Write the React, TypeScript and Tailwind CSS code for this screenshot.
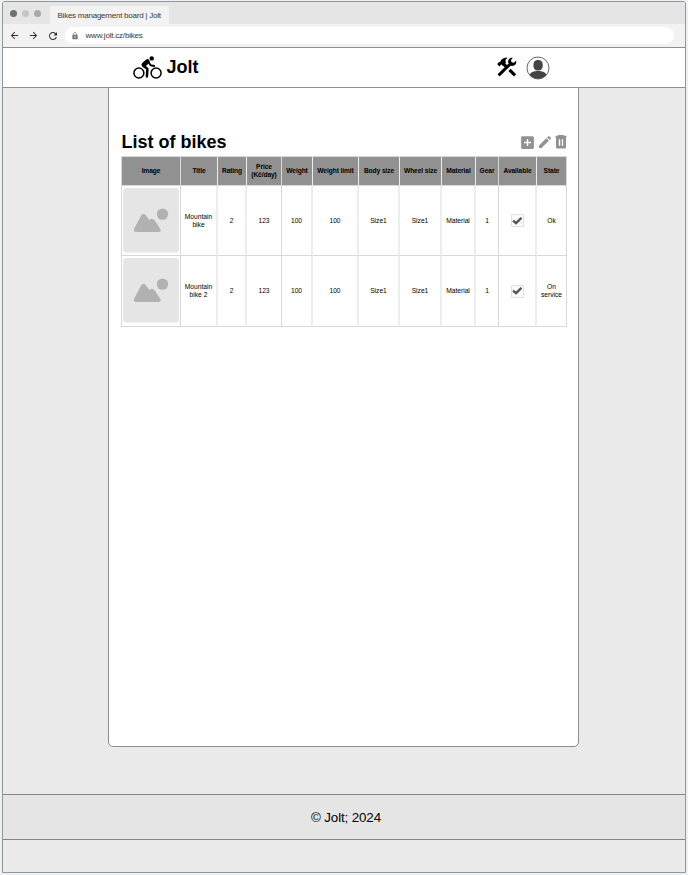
import React from "react";
import { MdAddBox, MdEdit, MdArrowBack, MdArrowForward, MdRefresh, MdLock } from "react-icons/md";

const thin = "border-r border-r-[#d8d8d8]";
const wide = "border-r-2 border-r-[#ededed]";
const edges = [thin, wide, wide, thin, wide, wide, wide, wide, wide, thin, wide, thin];
const heads = ["Image", "Title", "Rating", "Price\n(Kč/day)", "Weight", "Weight limit", "Body size", "Wheel size", "Material", "Gear", "Available", "State"];
const rows = [
  ["", "Mountain\nbike", "2", "123", "100", "100", "Size1", "Size1", "Material", "1", "", "Ok"],
  ["", "Mountain\nbike 2", "2", "123", "100", "100", "Size1", "Size1", "Material", "1", "", "On\nservice"],
];

function Cyclist() {
  return (
    <svg width="29" height="23" viewBox="0 0 29 23" className="ml-[130px] shrink-0" fill="none" stroke="black">
      <circle cx="5.9" cy="17" r="5" strokeWidth="1.5" />
      <circle cx="23.1" cy="17" r="5" strokeWidth="1.5" />
      <circle cx="18.7" cy="2.4" r="2.2" fill="black" stroke="none" />
      <path d="M15.2 5.6 17.6 9.3 21.2 10" strokeWidth="1.9" strokeLinecap="round" strokeLinejoin="round" />
      <path d="M14.4 5.5 10.8 8.7" strokeWidth="4.6" strokeLinecap="round" />
      <path d="M10.6 10 14.4 12.8 13.9 20.4" strokeWidth="2.5" strokeLinecap="round" strokeLinejoin="round" />
    </svg>
  );
}

function Tools() {
  return (
    <svg width="20" height="20" viewBox="0 0 20 20" className="mb-[2px] ml-[298px] shrink-0" stroke="black">
      <path d="M1.6 18.4 14 6.2" strokeWidth="3" fill="none" />
      <path d="M11.2 5.4Q10.6 2 13.8.8L15.8.7 13.9 3.2 14.6 5.2 16.8 5.7 19.2 3.6Q19.6 8 16 8.8 14.2 9.1 13 8.4Z" stroke="none" />
      <path d="M5.8 6.2 9.6 10M12.5 12.9 18.1 18.4" strokeWidth="3.2" fill="none" />
      <path d="M.2 6.9 2.1 4.9 3.1 5.2Q4.2 1.2 9.8.6L10.3 1.2Q7.9 2.2 8.6 4.4L9 5.4 5.6 8.8 4.4 7.3 3.8 8.1 2.3 9.4Z" stroke="none" />
    </svg>
  );
}

function Placeholder({ className = "" }: { className?: string }) {
  return (
    <svg width="56" height="65" viewBox="0 0 56 65" className={"shrink-0 " + className}>
      <rect width="56" height="64.5" rx="3.5" fill="#e5e5e5" />
      <circle cx="39.5" cy="26.1" r="5.7" fill="#b1b1b1" />
      <path d="M11.3 40.3 18.2 27.6Q20.6 24 23.1 27.4L26.4 32Q29.2 29.1 31.8 32.6L37.2 40.8Q38.8 44 35.5 44H13.5Q9.5 44 11.3 40.3Z" fill="#b1b1b1" />
    </svg>
  );
}

function Check() {
  return (
    <span className="flex h-[13px] w-[13px] items-center justify-center rounded-[1px] border border-[#e0e0e0] bg-[#fafafa]">
      <svg width="10" height="10" viewBox="0 0 10 10" fill="none" stroke="#555" strokeWidth="2.4">
        <path d="M1.1 4.6 4 7.2 9.5 1.8" />
      </svg>
    </span>
  );
}

export default function App() {
  return (
    <div className="h-[875px] w-[688px] overflow-hidden bg-[#edf0f4] pl-[2px] pt-px font-['Liberation_Sans',Arial,sans-serif] text-black">
      <div className="flex h-[872px] w-[684px] flex-col overflow-hidden rounded-t-[3px] border border-[#949597] bg-[#eaeaea]">
        <div className="flex h-[22px] shrink-0 bg-[#e5e5e5]">
          <div className="flex w-[47px] items-center gap-[5px] pl-[7px]">
            <i className="h-[7px] w-[7px] rounded-full bg-[#707070]" />
            <i className="h-[7px] w-[7px] rounded-full bg-[#c5c5c5]" />
            <i className="h-[7px] w-[7px] rounded-full bg-[#a8a8a8]" />
          </div>
          <div className="mt-1 h-[18px] w-[119px] whitespace-nowrap rounded-t-[2px] bg-[#f2f2f2] pl-[7.5px] text-[8px] leading-[19px] tracking-[-0.24px] text-[#383838]">Bikes management board | Jolt</div>
        </div>
        <div className="flex h-[23px] shrink-0 items-center bg-[#f2f2f2] text-[#2e2e2e]">
          <MdArrowBack size={11} className="ml-[6px]" />
          <MdArrowForward size={11} className="ml-[8px]" />
          <MdRefresh size={12} className="ml-[8px]" />
          <div className="ml-[6px] flex h-[17px] w-[609px] items-center rounded-full bg-white pl-[6px]">
            <MdLock size={8} color="#777" />
            <span className="ml-[6.5px] text-[8px] tracking-[-0.2px] text-[#383838]">www.jolt.cz/bikes</span>
          </div>
        </div>
        <header className="-mx-px flex h-[41px] shrink-0 items-center border border-[#8e8e8e] bg-white">
          <Cyclist />
          <h1 className="mb-[2px] ml-[4.5px] w-[32px] text-[18px] font-bold leading-none">Jolt</h1>
          <Tools />
          <svg width="24" height="24" viewBox="0 0 24 24" className="ml-[9px] shrink-0">
            <circle cx="12" cy="12" r="11" fill="white" stroke="#666" />
            <rect x="7.5" y="4" width="9.2" height="10.4" rx="4.2" fill="#444" />
            <path d="M3.7 19C4.5 16 7.5 15 12 15S19.5 16 20.3 19Q17 22.8 12 22.8T3.7 19Z" fill="#444" />
          </svg>
        </header>
        <main className="-mt-px ml-[105px] h-[660px] w-[471px] shrink-0 rounded-b-[5px] border border-[#8e8e8e] bg-white pl-[12px] pt-[42px]">
          <div className="flex h-[26px] w-[446px] items-center pb-[2px]">
            <h2 className="ml-[0.5px] text-[18px] font-bold leading-none">List of bikes</h2>
            <div className="ml-auto flex items-center text-[#919191]">
              <MdAddBox size={17} />
              <MdEdit size={16} className="ml-px" />
              <svg width="12" height="14" viewBox="0 0 12 14" className="ml-[2px]">
                <path fill="currentColor" fillRule="evenodd" d="M3.5 0h5l.8.8H11.5v1.8H.5V.8h2.2ZM1 2.6h10v9.7q0 1.2-1.2 1.2H2.2Q1 13.5 1 12.3ZM3.8 4.2v6.5h1.4V4.2ZM6.8 4.2v6.5h1.4V4.2Z" />
              </svg>
            </div>
          </div>
          <div className="grid w-[446px] grid-cols-[59px_37px_29px_35px_31px_46px_41px_42px_34px_23px_38px_30px] grid-rows-[29px_70px_71px] border-l border-t border-[#d8d8d8] text-center text-[6.67px] leading-[8px]">
            {heads.map((h, i) => (
              <div key={h} className={"flex items-center justify-center whitespace-pre border-b border-b-[#d8d8d8] bg-[#919191] font-bold tracking-[-0.1px] " + edges[i].replace("border-r-2", "border-r")}>{h}</div>
            ))}
            {rows.map((row, r) => row.map((v, i) => (
              <div key={`${r}-${i}`} className={"flex items-center justify-center whitespace-pre border-b border-b-[#d8d8d8] " + edges[i]}>
                {i === 0 ? <Placeholder className={r === 1 ? "mb-[2px]" : ""} /> : i === 10 ? <Check /> : v}
              </div>
            )))}
          </div>
        </main>
        <footer className="-mx-px mt-[47px] flex h-[46px] shrink-0 items-center justify-center border border-[#858585] bg-[#e5e5e5] pl-[4px] pt-[2px] text-[13.33px] tracking-[-0.12px]">© Jolt; 2024</footer>
      </div>
    </div>
  );
}
